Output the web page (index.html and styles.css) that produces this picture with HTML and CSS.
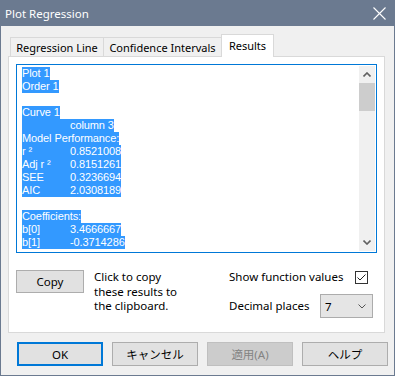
FILE: index.html
```html
<!DOCTYPE html>
<html lang="en">
<head>
    <meta charset="UTF-8">
    <title>Plot Regression</title>
    <link rel="stylesheet" href="styles.css">
</head>
<body>

    <div class="window">
        <div class="titlebar">
            <span class="title">Plot Regression</span>
            <svg class="close" width="13" height="13" viewBox="0 0 13 13">
                <path d="M0.5 0.5 L12.5 12.5 M12.5 0.5 L0.5 12.5" stroke="#fff" stroke-width="1.1" fill="none"/>
            </svg>
        </div>

        <div class="tabs">
            <div class="tab">Regression Line</div>
            <div class="tab">Confidence Intervals</div>
            <div class="tab active">Results</div>
        </div>

        <div class="panel">
            <div class="results">
                <div class="output">
                    <div class="line"><span class="sel">Plot 1</span></div>
                    <div class="line"><span class="sel">Order 1</span></div>
                    <div class="line"></div>
                    <div class="line"><span class="sel">Curve 1</span></div>
                    <div class="line"><span class="sel"><span class="lbl"></span>column 3</span></div>
                    <div class="line"><span class="sel">Model Performance:</span></div>
                    <div class="line"><span class="sel"><span class="lbl">r ²</span>0.8521008</span></div>
                    <div class="line"><span class="sel"><span class="lbl">Adj r ²</span>0.8151261</span></div>
                    <div class="line"><span class="sel"><span class="lbl">SEE</span>0.3236694</span></div>
                    <div class="line"><span class="sel"><span class="lbl">AIC</span>2.0308189</span></div>
                    <div class="line"></div>
                    <div class="line"><span class="sel">Coefficients:</span></div>
                    <div class="line"><span class="sel"><span class="lbl">b[0]</span>3.4666667</span></div>
                    <div class="line"><span class="sel"><span class="lbl">b[1]</span>-0.3714286</span></div>
                </div>
                <div class="scrollbar">
                    <div class="arrow">
                        <svg width="8" height="5" viewBox="0 0 8 5"><path d="M0.5 4.5 L4 1 L7.5 4.5" stroke="#606060" stroke-width="1.6" fill="none"/></svg>
                    </div>
                    <div class="track"><div class="thumb"></div></div>
                    <div class="arrow">
                        <svg width="8" height="5" viewBox="0 0 8 5"><path d="M0.5 0.5 L4 4 L7.5 0.5" stroke="#606060" stroke-width="1.6" fill="none"/></svg>
                    </div>
                </div>
            </div>

            <div class="options">
                <button class="btn copy">Copy</button>
                <p class="hint">Click to copy<br>these results to<br>the clipboard.</p>
                <div class="settings">
                    <span class="label">Show function values</span>
                    <span class="check">
                        <svg width="11" height="11" viewBox="0 0 11 11"><path d="M1.5 5.5 L4 8 L9.5 2.5" stroke="#222" stroke-width="1" fill="none"/></svg>
                    </span>
                    <span class="label">Decimal places</span>
                    <div class="select">
                        <span>7</span>
                        <svg width="8" height="5" viewBox="0 0 8 5"><path d="M0.5 0.5 L4 4 L7.5 0.5" stroke="#555" stroke-width="1" fill="none"/></svg>
                    </div>
                </div>
            </div>
        </div>

        <div class="actions">
            <button class="btn default">OK</button>
            <button class="btn">キャンセル</button>
            <button class="btn" disabled>適用(A)</button>
            <button class="btn">ヘルプ</button>
        </div>
    </div>

</body>
</html>
```

FILE: styles.css
```css
body {
    margin: 0;
    background: #f0f0f0;
    font-family: 'Noto Sans', 'Noto Sans CJK JP', sans-serif;
    font-size: 11.5px;
    color: #000;
}

.window {
    width: 395px;
    height: 376px;
    box-sizing: border-box;
    border: 1px solid #6b7a90;
    border-top: none;
    background: #f0f0f0;
    overflow: hidden;
}

.titlebar {
    height: 26px;
    margin: 0 -1px;
    padding: 0 9px 0 5px;
    background: #6b7a90;
    color: #fff;
    display: flex;
    align-items: center;
    justify-content: space-between;
    font-size: 11.5px;
}

.close {
    margin-top: 1px;
}

/* tab strip */
.tabs {
    display: flex;
    align-items: flex-end;
    height: 22px;
    margin: 8px 0 0 9px;
    font-size: 11px;
}

.tab {
    height: 19px;
    box-sizing: border-box;
    border: 1px solid #d9d9d9;
    border-bottom: none;
    background: #f0f0f0;
    display: flex;
    align-items: center;
    justify-content: center;
    width: 94px;
}

.tab + .tab {
    margin-left: -1px;
}

.tab:nth-child(2) {
    width: 119px;
}

.tab.active {
    width: 53px;
    height: 23px;
    margin-bottom: -1px;
    background: #fff;
    position: relative;
    z-index: 1;
    padding-bottom: 2px;
}

.panel {
    width: 377px;
    height: 277px;
    box-sizing: border-box;
    margin-left: 7px;
    border: 1px solid #d9d9d9;
    background: #fff;
}

/* results text box */
.results {
    width: 361px;
    height: 189px;
    box-sizing: border-box;
    margin: 7px 0 0 7px;
    border: 1px solid #0078d7;
    padding: 1px;
    display: flex;
}

.output {
    flex: 1;
    overflow: hidden;
    padding: 1px 0 0 4px;
    font-family: 'Liberation Sans', Arial, sans-serif;
    font-size: 11px;
    line-height: 13px;
    letter-spacing: -0.1px;
}

.line {
    height: 13px;
    white-space: nowrap;
}

.sel {
    display: inline-block;
    height: 13px;
    background: #3399ff;
    color: #fff;
}

.lbl {
    display: inline-block;
    width: 48px;
}

.scrollbar {
    width: 16px;
    background: #f0f0f0;
    display: flex;
    flex-direction: column;
}

.arrow {
    height: 17px;
    display: flex;
    align-items: center;
    justify-content: center;
}

.track {
    flex: 1;
}

.thumb {
    height: 28px;
    background: #cdcdcd;
}

/* bottom part of the panel */
.options {
    display: flex;
    align-items: flex-start;
    margin-top: 17px;
    padding: 0 11px 0 7px;
}

.btn {
    font-family: 'Noto Sans', 'Noto Sans CJK JP', sans-serif;
    font-size: 11.5px;
    color: #000;
    background: #e1e1e1;
    border: 1px solid #adadad;
    box-sizing: border-box;
    padding: 0;
    margin: 0;
}

.copy {
    width: 68px;
    height: 23px;
}

.hint {
    margin: 0 0 0 10px;
    line-height: 14.5px;
}

.settings {
    margin-left: auto;
    width: 144px;
    flex: none;
    display: grid;
    grid-template-columns: minmax(0, 1fr) 53px;
    grid-template-rows: 14px 24px;
    row-gap: 10px;
    align-items: center;
}

.label {
    line-height: 14px;
    white-space: nowrap;
}

.check {
    justify-self: end;
    margin-right: 5px;
    width: 13px;
    height: 13px;
    box-sizing: border-box;
    border: 1px solid #333;
    background: #fff;
    display: flex;
    align-items: center;
    justify-content: center;
}

.select {
    height: 24px;
    box-sizing: border-box;
    border: 1px solid #acacac;
    background: #e5e5e5;
    display: flex;
    align-items: center;
    justify-content: space-between;
    padding: 0 6px 0 4px;
}

/* dialog buttons */
.actions {
    display: flex;
    gap: 9px;
    margin: 9px 0 0 16px;
}

.actions .btn {
    width: 86px;
    height: 24px;
}

.btn.default {
    border: 2px solid #0078d7;
}

.btn:disabled {
    background: #cccccc;
    border-color: #bfbfbf;
    color: #838383;
}
```
